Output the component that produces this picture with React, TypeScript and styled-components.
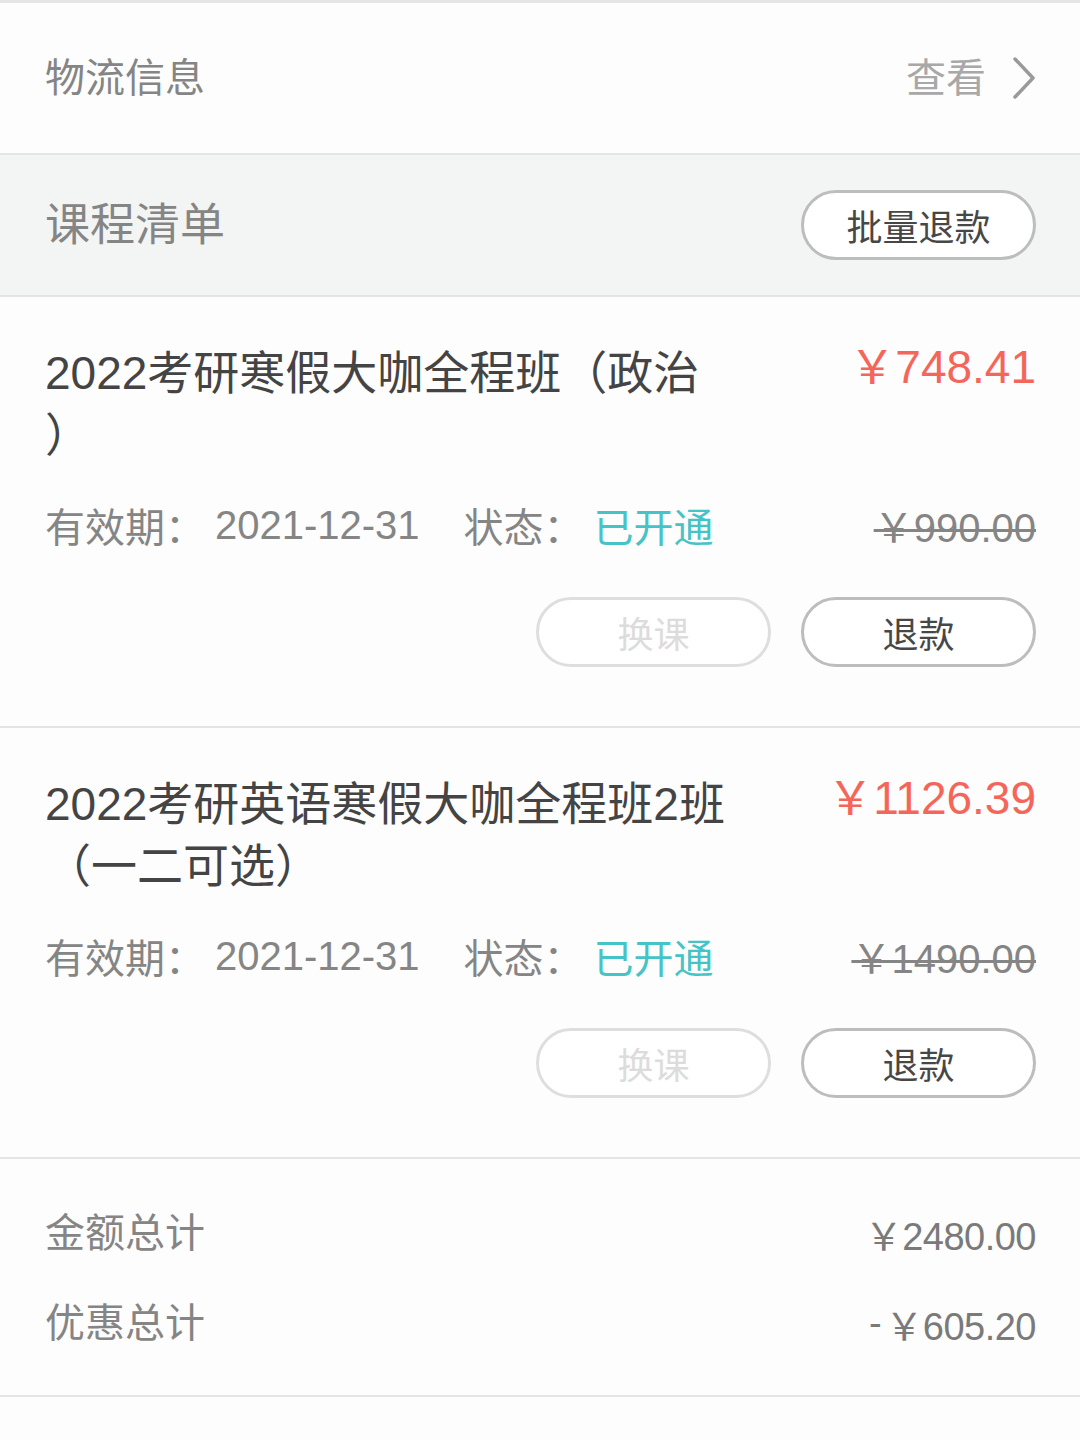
import React from "react";
import styled, { createGlobalStyle } from "styled-components";

const Global = createGlobalStyle`
  html, body { margin: 0; padding: 0; background: #fdfdfd; }
  body { font-family: "Liberation Sans", "Noto Sans CJK SC", sans-serif; }
  * { box-sizing: border-box; }
`;

const Page = styled.div`
  width: 1080px;
  min-height: 1440px;
  background: #fdfdfd;
  border-top: 3px solid #e4e6e6;
`;

const Divider = styled.div`
  height: 2px;
  background: #e2e5e5;
`;

const InfoRow = styled.div`
  height: 150px;
  display: flex;
  align-items: center;
  justify-content: space-between;
  padding: 0 44px 0 45px;
`;

const Label = styled.div<{ $size?: number }>`
  font-size: ${(p) => p.$size ?? 40}px;
  color: #858585;
  line-height: 1;
`;

const ViewLink = styled.div`
  display: flex;
  align-items: center;
  gap: 26px;
  font-size: 40px;
  color: #a8a8a8;
  line-height: 1;
`;

const Header = styled.div`
  height: 140px;
  background: #f3f4f4;
  display: flex;
  align-items: center;
  justify-content: space-between;
  padding: 0 44px 0 45px;
`;

const PillButton = styled.button<{ $disabled?: boolean }>`
  width: 235px;
  height: 70px;
  border-radius: 35px;
  background: #fff;
  border: 3px solid ${(p) => (p.$disabled ? "#dedede" : "#bdbdbd")};
  color: ${(p) => (p.$disabled ? "#dcdcdc" : "#474747")};
  font-family: "Noto Sans CJK SC", sans-serif;
  font-size: 36px;
  line-height: 1;
  padding: 0;
  display: flex;
  align-items: center;
  justify-content: center;
`;

const Item = styled.div`
  padding: 45px 44px 59px 45px;
  display: flex;
  flex-direction: column;
`;

const TitleRow = styled.div`
  display: flex;
  justify-content: space-between;
  align-items: flex-start;
`;

const Title = styled.div`
  width: 685px;
  flex: none;
  font-size: 46px;
  line-height: 62px;
  color: #444;
  line-break: anywhere;
  word-break: break-all;
  text-spacing-trim: space-all;
`;

const Price = styled.div`
  font-size: 46px;
  line-height: 62px;
  color: #f5665a;
  white-space: nowrap;
  margin-top: -6px;
`;

const MetaRow = styled.div`
  margin-top: 28px;
  height: 62px;
  display: flex;
  align-items: center;
  font-size: 40px;
  color: #858585;
`;

const MetaLabel = styled.span<{ $gap?: number }>`
  margin-left: ${(p) => p.$gap ?? 0}px;
  margin-right: 10px;
`;

const MetaValue = styled.span<{ $accent?: boolean }>`
  color: ${(p) => (p.$accent ? "#45c3c7" : "#858585")};
`;

const OldPrice = styled.span`
  margin-left: auto;
  color: #858585;
  text-decoration: line-through;
  text-decoration-thickness: 3px;
`;

const Actions = styled.div`
  margin-top: 41px;
  display: flex;
  justify-content: flex-end;
  gap: 30px;
`;

const Summary = styled.div`
  padding: 29px 44px 27px 45px;
`;

const SummaryRow = styled.div`
  height: 90px;
  display: flex;
  align-items: center;
  justify-content: space-between;
`;

const SummaryValue = styled.div`
  font-size: 38px;
  color: #7a7a7a;
  letter-spacing: -0.5px;
  display: flex;
  align-items: center;
  gap: 4px;
`;

const Chevron = () => (
  <svg width="24" height="42" viewBox="0 0 24 42" fill="none">
    <path d="M3 2 L21 21 L3 40" stroke="#9a9a9a" strokeWidth="3.5" strokeLinecap="round" strokeLinejoin="round" />
  </svg>
);

type Course = { title: string; price: string; oldPrice: string; date: string };

const courses: Course[] = [
  { title: "2022考研寒假大咖全程班（政治）", price: "￥748.41", oldPrice: "￥990.00", date: "2021-12-31" },
  { title: "2022考研英语寒假大咖全程班2班（一二可选）", price: "￥1126.39", oldPrice: "￥1490.00", date: "2021-12-31" },
];

export default function App() {
  return (
    <>
      <Global />
      <Page>
        <InfoRow>
          <Label>物流信息</Label>
          <ViewLink>
            查看
            <Chevron />
          </ViewLink>
        </InfoRow>
        <Divider />
        <Header>
          <Label $size={45}>课程清单</Label>
          <PillButton>批量退款</PillButton>
        </Header>
        <Divider />
        {courses.map((c) => (
          <React.Fragment key={c.title}>
            <Item>
              <TitleRow>
                <Title>{c.title}</Title>
                <Price>{c.price}</Price>
              </TitleRow>
              <MetaRow>
                <MetaLabel>有效期：</MetaLabel>
                <MetaValue>{c.date}</MetaValue>
                <MetaLabel $gap={44}>状态：</MetaLabel>
                <MetaValue $accent>已开通</MetaValue>
                <OldPrice>{c.oldPrice}</OldPrice>
              </MetaRow>
              <Actions>
                <PillButton $disabled>换课</PillButton>
                <PillButton>退款</PillButton>
              </Actions>
            </Item>
            <Divider />
          </React.Fragment>
        ))}
        <Summary>
          <SummaryRow>
            <Label>金额总计</Label>
            <SummaryValue>￥2480.00</SummaryValue>
          </SummaryRow>
          <SummaryRow>
            <Label>优惠总计</Label>
            <SummaryValue>
              <span>-</span>
              <span>￥605.20</span>
            </SummaryValue>
          </SummaryRow>
        </Summary>
        <Divider />
      </Page>
    </>
  );
}
